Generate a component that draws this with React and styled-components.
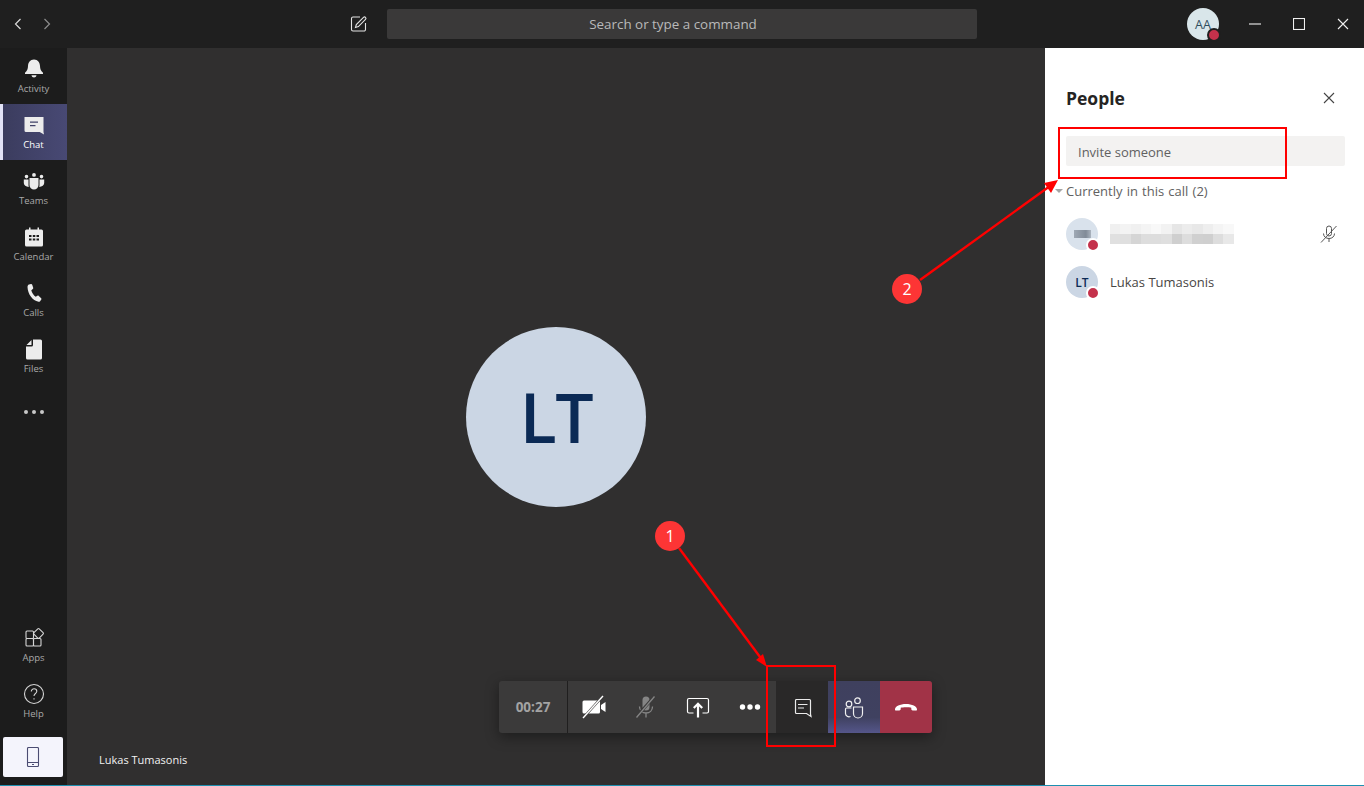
import React from 'react';
import styled, { createGlobalStyle } from 'styled-components';

const GlobalStyle = createGlobalStyle`
  html, body { margin: 0; padding: 0; background: #2f2e2e; }
  body { font-family: "Open Sans", "Noto Sans", sans-serif; overflow: hidden; }
  * { box-sizing: border-box; }
`;

const Page = styled.div`
  position: relative;
  width: 1364px;
  height: 786px;
  display: flex;
  flex-direction: column;
  overflow: hidden;
  border-bottom: 1px solid #1d8fb0;
`;

const TitleBar = styled.header`
  height: 48px;
  flex: none;
  background: #1f1f1f;
  display: grid;
  grid-template-columns: 1fr 590px 1fr;
  align-items: center;
`;

const TitleLeft = styled.div`
  display: flex;
  align-items: center;
  justify-content: space-between;
  padding: 0 19px 0 11px;
`;

const NavGroup = styled.div`
  display: flex;
  gap: 15px;
`;

const NavIcon = styled.svg`
  width: 14px;
  height: 14px;
  fill: none;
  stroke: ${p => (p.$dim ? '#8d8d8d' : '#d8d8d8')};
  stroke-width: 1.2;
`;

const ComposeIcon = styled.svg`
  width: 18px;
  height: 18px;
  fill: none;
  stroke: #e4e4e4;
  stroke-width: 1.1;
`;

const SearchBox = styled.div`
  height: 30px;
  padding-right: 18px;
  background: #3a3939;
  border-radius: 2px;
  color: #b9b9b9;
  font-size: 13.4px;
  display: flex;
  align-items: center;
  justify-content: center;
`;

const TitleRight = styled.div`
  display: flex;
  align-items: center;
  justify-content: flex-end;
  margin-right: -1px;
`;

const Avatar = styled.div`
  position: relative;
  width: ${p => p.$size || 32}px;
  height: ${p => p.$size || 32}px;
  flex: none;
  border-radius: 50%;
  background: ${p => p.$bg || '#cbd6e4'};
  color: ${p => p.$color || '#0b2a55'};
  font-size: ${p => p.$font || 12}px;
  font-weight: ${p => p.$weight || 600};
  display: flex;
  align-items: center;
  justify-content: center;
`;

const StatusDot = styled.span`
  position: absolute;
  right: -2px;
  bottom: -2px;
  width: 14px;
  height: 14px;
  border-radius: 50%;
  background: #c4314b;
  border: 2px solid ${p => p.$ring || '#fff'};
`;

const HeaderAvatar = styled(Avatar)`
  margin-right: 14px;
  letter-spacing: 0.2px;
`;

const WinButton = styled.div`
  width: 44px;
  height: 48px;
  display: flex;
  align-items: center;
  justify-content: center;
`;

const WinIcon = styled.svg`
  width: 12px;
  height: 12px;
  fill: none;
  stroke: #f0f0f0;
  stroke-width: 1.1;
`;

const Body = styled.div`
  flex: 1;
  display: flex;
  min-height: 0;
`;

const Rail = styled.nav`
  width: 67px;
  flex: none;
  background: #1c1c1c;
  display: flex;
  flex-direction: column;
  justify-content: space-between;
`;

const RailGroup = styled.div`
  display: flex;
  flex-direction: column;
`;

const RailItem = styled.div`
  height: 56px;
  display: flex;
  flex-direction: column;
  align-items: center;
  justify-content: flex-start;
  padding-top: 10px;
  color: ${p => (p.$active ? '#ffffff' : '#a9a9a9')};
  background: ${p => (p.$active ? 'linear-gradient(90deg, #3b3c5e, #484974)' : 'transparent')};
  border-left: 3px solid ${p => (p.$active ? '#e2e2f6' : 'transparent')};
  padding-right: 3px;
`;

const RailIcon = styled.svg`
  width: 22px;
  height: 22px;
  fill: ${p => (p.$line ? 'none' : '#ececec')};
  stroke: ${p => (p.$line ? '#d6d6d6' : 'none')};
  stroke-width: 1.1;
  flex: none;
`;

const RailLabel = styled.span`
  font-size: 9.5px;
  line-height: 13px;
  margin-top: 2px;
`;

const RailDots = styled.div`
  height: 56px;
  display: flex;
  align-items: center;
  justify-content: center;
  gap: 4px;
`;

const RailDot = styled.span`
  width: 4px;
  height: 4px;
  border-radius: 50%;
  background: #c8c8c8;
`;

const PhoneButton = styled.div`
  width: 60px;
  height: 40px;
  margin: 8px 4px 8px 3px;
  background: #f4f4fc;
  border-radius: 2px;
  display: flex;
  align-items: center;
  justify-content: center;
`;

const PhoneIcon = styled.svg`
  width: 14px;
  height: 20px;
  fill: none;
  stroke: #4b4c72;
  stroke-width: 1.1;
`;

const Stage = styled.main`
  position: relative;
  flex: 1;
  background: #302f2f;
  display: flex;
  align-items: center;
  justify-content: center;
`;

const NameTag = styled.div`
  position: absolute;
  left: 32px;
  bottom: 18px;
  color: #f2f2f2;
  font-size: 11px;
  font-weight: 500;
`;

const CallBar = styled.div`
  position: absolute;
  left: 432px;
  bottom: 52px;
  height: 52px;
  display: flex;
  border-radius: 3px;
  overflow: hidden;
  box-shadow: 0 4px 14px rgba(0, 0, 0, 0.4);
  background: #3b3a3a;
`;

const Timer = styled.div`
  width: 69px;
  border-right: 1px solid #201f1f;
  color: #a3a3a3;
  font-size: 13.5px;
  font-weight: 700;
  display: flex;
  align-items: center;
  justify-content: center;
`;

const BarButton = styled.div`
  width: 52px;
  display: flex;
  align-items: center;
  justify-content: center;
  background: ${p => p.$bg || 'transparent'};
`;

const BarIcon = styled.svg`
  width: 26px;
  height: 26px;
  flex: none;
`;

const Panel = styled.aside`
  width: 319px;
  flex: none;
  background: #ffffff;
  padding: 36px 19px 0 21px;
  display: flex;
  flex-direction: column;
`;

const PanelHead = styled.div`
  display: flex;
  align-items: center;
  justify-content: space-between;
  height: 28px;
`;

const PanelTitle = styled.h2`
  margin: 0;
  font-size: 17.5px;
  font-weight: 700;
  color: #252423;
`;

const CloseIcon = styled.svg`
  width: 12px;
  height: 12px;
  margin-right: 10px;
  fill: none;
  stroke: #444;
  stroke-width: 1.1;
`;

const InviteBox = styled.div`
  height: 30px;
  margin-top: 24px;
  padding: 1px 0 0 12px;
  background: #f3f2f1;
  border-radius: 2px;
  color: #616161;
  font-size: 13px;
  display: flex;
  align-items: center;
`;

const SectionLabel = styled.div`
  position: relative;
  margin-top: 15px;
  height: 20px;
  color: #616161;
  font-size: 13px;
  line-height: 20px;
  word-spacing: 0.8px;
`;

const Caret = styled.span`
  position: absolute;
  left: -11px;
  top: 8px;
  border-left: 4px solid transparent;
  border-right: 4px solid transparent;
  border-top: 4px solid #a5a5a5;
`;

const PersonList = styled.div`
  margin-top: 17px;
  display: flex;
  flex-direction: column;
  gap: 16px;
`;

const Person = styled.div`
  height: 32px;
  display: flex;
  align-items: center;
  gap: 12px;
`;

const PersonName = styled.span`
  color: #484644;
  font-size: 13px;
`;

const BlurName = styled.div`
  display: grid;
  grid-template-columns: repeat(12, 10.3px);
  grid-auto-rows: 10px;
`;

const BlurCell = styled.span`
  background: ${p => p.$c};
`;

const MutedIcon = styled.svg`
  width: 20px;
  height: 20px;
  margin-left: auto;
  margin-right: 6px;
  fill: none;
  stroke: #555;
  stroke-width: 1;
`;

const BlurAvatarMark = styled.span`
  width: 17px;
  height: 8px;
  background: linear-gradient(90deg, #98a2ae, #77818e 70%, #a6afba);
  opacity: 0.9;
`;

const BigAvatar = styled(Avatar)`
  letter-spacing: -1.5px;
`;

const RedBox = styled.div`
  position: absolute;
  border: 2px solid #ff0000;
  left: ${p => p.$x}px;
  top: ${p => p.$y}px;
  width: ${p => p.$w}px;
  height: ${p => p.$h}px;
`;

const Badge = styled.div`
  position: absolute;
  left: ${p => p.$x - 15}px;
  top: ${p => p.$y - 15}px;
  width: 30px;
  height: 30px;
  border-radius: 50%;
  background: #fd3535;
  color: #fff;
  font-size: 16px;
  display: flex;
  align-items: center;
  justify-content: center;
`;

const ArrowLayer = styled.svg`
  position: absolute;
  left: 0;
  top: 0;
  width: 1364px;
  height: 786px;
  pointer-events: none;
`;

const topCells = ['#f0f0f0', '#f3f3f3', '#f0f0f0', '#f4f4f4', '#f8f8f8', '#f2f2f2', '#e6e6e6', '#ececec', '#e8e8e8', '#eeeeee', '#f4f4f4', '#f8f8f8'];
const bottomCells = ['#e0e0e0', '#dfdfdf', '#d5d5d5', '#dddddd', '#dddddd', '#dfdfdf', '#cfcfcf', '#dddddd', '#d0d0d0', '#cfcfcf', '#dddddd', '#e8e8e8'];

const railTop = [
  { label: 'Activity', icon: <path d="M11 1.500c-4 0-5.800 3-6 6.500-.1 2.800-.8 4.800-3 6.800v1.200h18v-1.200c-2.200-2-2.900-4-3-6.800-.2-3.500-2-6.500-6-6.500zM8.500 17.300h5c-.3 1.400-1.200 2.200-2.500 2.200s-2.200-.8-2.500-2.200z" /> },
  { label: 'Chat', active: true, icon: <path fillRule="evenodd" d="M1.500 3h19v15l.5 2.500-4.300-2.500H3a1.500 1.500 0 0 1-1.500-1.500zM7 7.500v1.300h8V7.500zM7 11v1.300h5.500V11z" /> },
  { label: 'Teams', icon: <path d="M11 3a1.900 1.900 0 1 1 0 3.800A1.900 1.900 0 0 1 11 3zM3.500 4.800a1.800 1.800 0 1 1 0 3.600 1.800 1.800 0 0 1 0-3.600zm15 0a1.800 1.800 0 1 1 0 3.600 1.800 1.800 0 0 1 0-3.600zM6.500 8h9v7a4.500 4.500 0 0 1-9 0zM.8 9.500h4.700v5.500c0 .7.100 1.300.300 1.900C3 16.700.8 15.200.8 13zm15.700 0h4.700V13c0 2.200-2.200 3.700-5 3.900.2-.6.300-1.200.300-1.900z" /> },
  { label: 'Calendar', icon: <path fillRule="evenodd" d="M6 1.500h1.500v2h7v-2H16v2h2.500A1.500 1.500 0 0 1 20 5v14a1.500 1.500 0 0 1-1.500 1.500h-15A1.500 1.500 0 0 1 2 19V5a1.500 1.500 0 0 1 1.500-1.500H6zM6 9v2h2.500V9zm3.800 0v2h2.500V9zm3.700 0v2H16V9zM6 12.500v2h2.500v-2zm3.800 0v2h2.500v-2zm3.700 0v2H16v-2z" /> },
  { label: 'Calls', icon: <path d="M6 2.500 8 2c.5-.1 1 .2 1.200.7l1 3c.2.500 0 1-.4 1.300L8.300 8.300c.5 2.400 2.200 5 4.400 6.400l1.700-1c.5-.3 1-.2 1.400.2l2.400 2.300c.4.400.4 1 .1 1.400l-1.200 1.600c-.4.500-1 .7-1.600.6C9.500 18.500 4.700 12 4.500 5c0-1.200.5-2.200 1.500-2.500z" /> },
  { label: 'Files', icon: <path d="M10 1.500h7.500A1.500 1.500 0 0 1 19 3v17a1.500 1.500 0 0 1-1.500 1.500h-13A1.500 1.500 0 0 1 3 20V8.500h5.500A1.500 1.500 0 0 0 10 7zM8.500 2v5H3.500z" /> },
];

export default function App() {
  return (
    <Page>
      <GlobalStyle />
      <TitleBar>
        <TitleLeft>
          <NavGroup>
            <NavIcon viewBox="0 0 14 14"><path d="M9.500 2 4.500 7l5 5" /></NavIcon>
            <NavIcon $dim viewBox="0 0 14 14"><path d="M4.500 2l5 5-5 5" /></NavIcon>
          </NavGroup>
          <ComposeIcon viewBox="0 0 18 18">
            <path d="M10 2H3a1.500 1.500 0 0 0-1.500 1.500v11A1.500 1.500 0 0 0 3 16h11a1.500 1.500 0 0 0 1.500-1.500V8" />
            <path d="M5.500 12.500l.8-3L13.500 2.300a1.300 1.300 0 0 1 2 2L8.400 11.600z" />
          </ComposeIcon>
        </TitleLeft>
        <SearchBox>Search or type a command</SearchBox>
        <TitleRight>
          <HeaderAvatar $bg="#d9e6ea" $color="#2f4d5e" $font={12.5} $weight={400}>
            AA
            <StatusDot $ring="#1f1f1f" />
          </HeaderAvatar>
          <WinButton><WinIcon viewBox="0 0 12 12"><path d="M0 6h12" /></WinIcon></WinButton>
          <WinButton><WinIcon viewBox="0 0 12 12"><rect x=".5" y=".5" width="11" height="11" /></WinIcon></WinButton>
          <WinButton><WinIcon viewBox="0 0 12 12"><path d="M1 1l10 10M11 1 1 11" /></WinIcon></WinButton>
        </TitleRight>
      </TitleBar>

      <Body>
        <Rail>
          <RailGroup>
            {railTop.map(item => (
              <RailItem key={item.label} $active={item.active}>
                <RailIcon viewBox="0 0 22 22">{item.icon}</RailIcon>
                <RailLabel>{item.label}</RailLabel>
              </RailItem>
            ))}
            <RailDots><RailDot /><RailDot /><RailDot /></RailDots>
          </RailGroup>
          <RailGroup>
            <RailItem>
              <RailIcon $line viewBox="0 0 22 22">
                <rect x="3" y="4" width="7.5" height="7.5" rx="1" />
                <rect x="3" y="11.5" width="7.5" height="7.5" rx="1" />
                <rect x="10.5" y="11.5" width="7.5" height="7.5" rx="1" />
                <rect x="11.7" y="2.7" width="7.5" height="7.5" rx="1" transform="rotate(45 15.5 6.5)" />
              </RailIcon>
              <RailLabel>Apps</RailLabel>
            </RailItem>
            <RailItem>
              <RailIcon $line viewBox="0 0 22 22">
                <circle cx="11" cy="11" r="9.5" />
                <path d="M8.300 8.500c0-1.600 1.200-2.700 2.800-2.700s2.700 1 2.700 2.400c0 2.300-2.800 2.300-2.800 4.800" />
                <path d="M11 15.300v1.200" />
              </RailIcon>
              <RailLabel>Help</RailLabel>
            </RailItem>
            <PhoneButton>
              <PhoneIcon viewBox="0 0 14 20">
                <rect x="1.5" y=".5" width="11" height="19" rx="1" />
                <path d="M1.500 15.500h11M6 17.500h2" />
              </PhoneIcon>
            </PhoneButton>
          </RailGroup>
        </Rail>

        <Stage>
          <BigAvatar $size={180} $font={68} $weight={600}>LT</BigAvatar>
          <NameTag>Lukas Tumasonis</NameTag>
          <CallBar>
            <Timer>00:27</Timer>
            <BarButton>
              <BarIcon viewBox="0 0 26 26">
                <path fill="#fff" d="M3 6.500h14.500A1.500 1.500 0 0 1 19 8v10a1.500 1.500 0 0 1-1.500 1.500H3A1.500 1.500 0 0 1 1.500 18V8A1.500 1.500 0 0 1 3 6.500zM20 11l4.500-3v10L20 15z" />
                <path stroke="#3b3a3a" strokeWidth="2.6" d="M21 3 3 23" />
                <path stroke="#fff" strokeWidth="1.4" d="M22 2 2 24" />
              </BarIcon>
            </BarButton>
            <BarButton>
              <BarIcon viewBox="0 0 26 26" fill="none" stroke="#858585" strokeWidth="1.3">
                <rect x="9.5" y="2.5" width="7" height="14" rx="3.5" fill="#858585" stroke="none" />
                <path d="M6.500 12.500c0 4 2.800 6.500 6.500 6.500s6.500-2.500 6.500-6.500M13 19v4.500" />
                <path stroke="#3b3a3a" strokeWidth="3" d="M21 3 4 22" />
                <path d="M21.500 2.500 3.500 23.500" />
              </BarIcon>
            </BarButton>
            <BarButton>
              <BarIcon viewBox="0 0 26 26" fill="none" stroke="#fff" strokeWidth="1.2">
                <path d="M8.500 19H4a1.500 1.500 0 0 1-1.500-1.500V6A1.500 1.500 0 0 1 4 4.500h18A1.500 1.500 0 0 1 23.500 6v11.500A1.500 1.500 0 0 1 22 19h-4.500" />
                <path strokeWidth="2.2" d="M13 23.500V10M8.800 14 13 9.800 17.200 14" />
              </BarIcon>
            </BarButton>
            <BarButton>
              <BarIcon viewBox="0 0 26 26" fill="#fff">
                <circle cx="5.500" cy="13" r="2.7" />
                <circle cx="13" cy="13" r="2.7" />
                <circle cx="20.500" cy="13" r="2.7" />
              </BarIcon>
            </BarButton>
            <BarButton $bg="#292828">
              <BarIcon viewBox="0 0 26 26" fill="none" stroke="#eaeaea" strokeWidth="1.2">
                <path d="M6.500 5.500h14a1 1 0 0 1 1 1V20l.5 2.500-4.500-3h-10a1 1 0 0 1-1-1v-12a1 1 0 0 1 1-1zM9 10.500h9.500M9 14h6" />
              </BarIcon>
            </BarButton>
            <BarButton $bg="linear-gradient(180deg, #3f405e, #3f4160 70%, #55568a)">
              <BarIcon viewBox="0 0 26 26" fill="none" stroke="#f0f0f0" strokeWidth="1.2">
                <circle cx="8" cy="10" r="2.8" />
                <circle cx="16.500" cy="6.700" r="2.8" />
                <path d="M10.500 14H5.500a1 1 0 0 0-1 1v4.500A3.500 3.500 0 0 0 9.500 22.500M12.500 13h9v6.500a4.500 4.500 0 0 1-9 0z" />
              </BarIcon>
            </BarButton>
            <BarButton $bg="#a13347">
              <BarIcon viewBox="0 0 26 26" fill="#fff">
                <path d="M2 15.500c0-3.200 5-5.500 11-5.500s11 2.300 11 5.500c0 .9-.6 1.300-1.400 1.100h-2.900c-.9-.1-1.400-.7-1.400-1.500v-1.300c-1.500-.7-9-.7-10.600 0v1.300c0 .8-.5 1.400-1.400 1.500H3.400c-.8.200-1.400-.2-1.400-1.100z" />
              </BarIcon>
            </BarButton>
          </CallBar>
        </Stage>

        <Panel>
          <PanelHead>
            <PanelTitle>People</PanelTitle>
            <CloseIcon viewBox="0 0 12 12"><path d="M1 1l10 10M11 1 1 11" /></CloseIcon>
          </PanelHead>
          <InviteBox>Invite someone</InviteBox>
          <SectionLabel><Caret />Currently in this call (2)</SectionLabel>
          <PersonList>
            <Person>
              <Avatar $bg="#d9e2ec">
                <BlurAvatarMark />
                <StatusDot />
              </Avatar>
              <BlurName>
                {topCells.map((c, i) => <BlurCell key={'t' + i} $c={c} />)}
                {bottomCells.map((c, i) => <BlurCell key={'b' + i} $c={c} />)}
              </BlurName>
              <MutedIcon viewBox="0 0 20 20">
                <rect x="7.5" y="2" width="5" height="10" rx="2.5" />
                <path d="M4.500 9.500c0 3 2.300 5 5.500 5s5.500-2 5.500-5M10 14.500V18" />
                <path d="M17.500 2 2 18.500" />
              </MutedIcon>
            </Person>
            <Person>
              <Avatar>
                LT
                <StatusDot />
              </Avatar>
              <PersonName>Lukas Tumasonis</PersonName>
            </Person>
          </PersonList>
        </Panel>
      </Body>

      <ArrowLayer viewBox="0 0 1364 786">
        <path d="M679 548 763 661" stroke="#ff0000" strokeWidth="2.4" fill="none" />
        <path d="M767 667 756 660 763 654z" fill="#ff0000" />
        <path d="M920 280 1050 186" stroke="#ff0000" strokeWidth="2.4" fill="none" />
        <path d="M1058 180 1051 193 1044 183z" fill="#ff0000" />
      </ArrowLayer>
      <RedBox $x={766} $y={665} $w={70} $h={82} />
      <RedBox $x={1058} $y={127} $w={229} $h={52} />
      <Badge $x={670} $y={536}>1</Badge>
      <Badge $x={907} $y={289}>2</Badge>
    </Page>
  );
}
